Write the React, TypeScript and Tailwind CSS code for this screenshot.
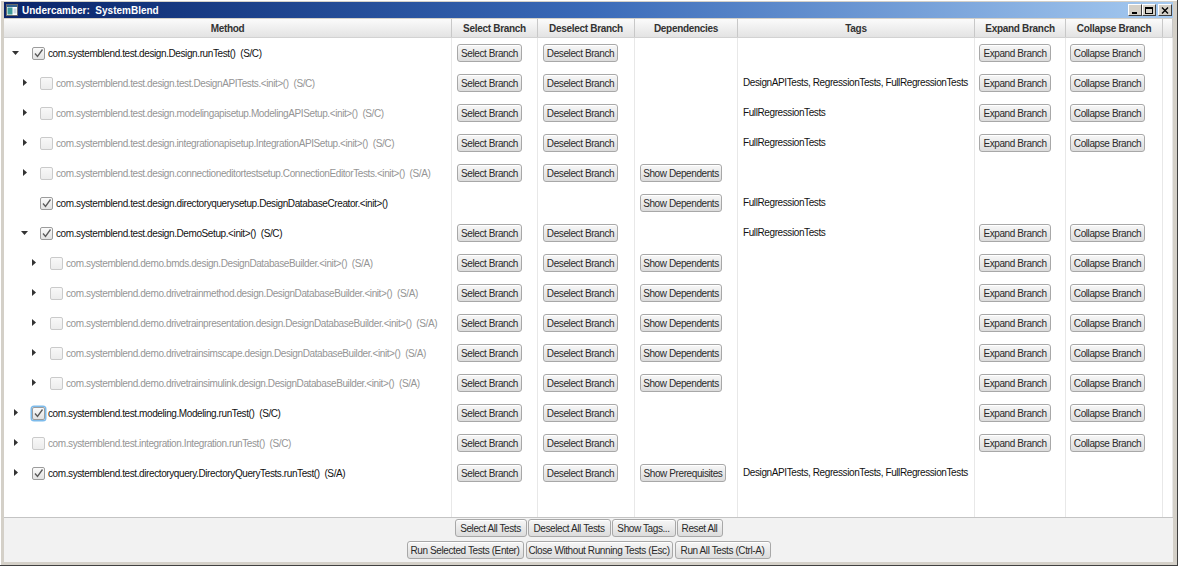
import clsx from "clsx";

// Column widths, left to right: Method, Select, Deselect, Dependencies, Tags, Expand, Collapse, filler
const COLS = "grid grid-cols-[448px_86px_97px_103px_237px_91px_97px_10px]";

const HEADERS = [
  "Method",
  "Select Branch",
  "Deselect Branch",
  "Dependencies",
  "Tags",
  "Expand Branch",
  "Collapse Branch",
  "",
];

type Row = {
  level: 0 | 1 | 2;
  arrow?: "open" | "closed";
  checked: boolean;
  enabled: boolean;
  focused?: boolean;
  label: string;
  branch?: boolean;
  dep?: string;
  tags?: string;
  expand?: boolean;
};

const ALL_TAGS = "DesignAPITests, RegressionTests, FullRegressionTests";

const ROWS: Row[] = [
  { level: 0, arrow: "open", checked: true, enabled: true, label: "com.systemblend.test.design.Design.runTest()  (S/C)", branch: true, expand: true },
  { level: 1, arrow: "closed", checked: false, enabled: false, label: "com.systemblend.test.design.test.DesignAPITests.<init>()  (S/C)", branch: true, tags: ALL_TAGS, expand: true },
  { level: 1, arrow: "closed", checked: false, enabled: false, label: "com.systemblend.test.design.modelingapisetup.ModelingAPISetup.<init>()  (S/C)", branch: true, tags: "FullRegressionTests", expand: true },
  { level: 1, arrow: "closed", checked: false, enabled: false, label: "com.systemblend.test.design.integrationapisetup.IntegrationAPISetup.<init>()  (S/C)", branch: true, tags: "FullRegressionTests", expand: true },
  { level: 1, arrow: "closed", checked: false, enabled: false, label: "com.systemblend.test.design.connectioneditortestsetup.ConnectionEditorTests.<init>()  (S/A)", branch: true, dep: "Show Dependents" },
  { level: 1, checked: true, enabled: true, label: "com.systemblend.test.design.directoryquerysetup.DesignDatabaseCreator.<init>()", dep: "Show Dependents", tags: "FullRegressionTests" },
  { level: 1, arrow: "open", checked: true, enabled: true, label: "com.systemblend.test.design.DemoSetup.<init>()  (S/C)", branch: true, tags: "FullRegressionTests", expand: true },
  { level: 2, arrow: "closed", checked: false, enabled: false, label: "com.systemblend.demo.bmds.design.DesignDatabaseBuilder.<init>()  (S/A)", branch: true, dep: "Show Dependents", expand: true },
  { level: 2, arrow: "closed", checked: false, enabled: false, label: "com.systemblend.demo.drivetrainmethod.design.DesignDatabaseBuilder.<init>()  (S/A)", branch: true, dep: "Show Dependents", expand: true },
  { level: 2, arrow: "closed", checked: false, enabled: false, label: "com.systemblend.demo.drivetrainpresentation.design.DesignDatabaseBuilder.<init>()  (S/A)", branch: true, dep: "Show Dependents", expand: true },
  { level: 2, arrow: "closed", checked: false, enabled: false, label: "com.systemblend.demo.drivetrainsimscape.design.DesignDatabaseBuilder.<init>()  (S/A)", branch: true, dep: "Show Dependents", expand: true },
  { level: 2, arrow: "closed", checked: false, enabled: false, label: "com.systemblend.demo.drivetrainsimulink.design.DesignDatabaseBuilder.<init>()  (S/A)", branch: true, dep: "Show Dependents", expand: true },
  { level: 0, arrow: "closed", checked: true, enabled: true, focused: true, label: "com.systemblend.test.modeling.Modeling.runTest()  (S/C)", branch: true, expand: true },
  { level: 0, arrow: "closed", checked: false, enabled: false, label: "com.systemblend.test.integration.Integration.runTest()  (S/C)", branch: true, expand: true },
  { level: 0, arrow: "closed", checked: true, enabled: true, label: "com.systemblend.test.directoryquery.DirectoryQueryTests.runTest()  (S/A)", branch: true, dep: "Show Prerequisites", tags: ALL_TAGS },
];

// disclosure box (10px) offset from the cell edge, and gap to the checkbox, per tree level
const INDENT = ["pl-[7px]", "pl-[16px]", "pl-[25px]"];
const ARROW_GAP = ["mr-[11px]", "mr-[10px]", "mr-[11px]"];

function Btn({ w, children }: { w: string; children: React.ReactNode }) {
  return (
    <span
      className={clsx(
        "flex h-[18px] shrink-0 items-center justify-center whitespace-nowrap rounded-[3px] border border-[#a8a8a8] bg-gradient-to-b from-[#f7f7f7] to-[#dcdcdc] text-[#2a2a2a] shadow-[inset_0_1px_0_#ffffff]",
        w
      )}
    >
      {children}
    </span>
  );
}

function Arrow({ kind }: { kind?: "open" | "closed" }) {
  if (!kind) return null;
  if (kind === "open")
    return (
      <svg width="8" height="5" viewBox="0 0 8 5">
        <polygon points="0,0 7,0 3.5,4" fill="#333" />
      </svg>
    );
  return (
    <svg width="5" height="8" viewBox="0 0 5 8">
      <polygon points="0,0 4,3.5 0,7" fill="#333" />
    </svg>
  );
}

function Check({ checked, enabled, focused }: { checked: boolean; enabled: boolean; focused?: boolean }) {
  return (
    <span
      className={clsx(
        "flex h-[13px] w-[13px] shrink-0 items-center justify-center rounded-[2px] border",
        enabled
          ? "border-[#9c9c9c] bg-gradient-to-b from-[#fbfbfb] to-[#e2e2e2]"
          : "border-[#cacaca] bg-gradient-to-b from-[#f8f8f8] to-[#ececec]",
        focused && "border-[#3b8fd4] shadow-[0_0_0_1.5px_#7dbbeb]"
      )}
    >
      {checked && (
        <svg width="11" height="11" viewBox="0 0 11 11">
          <path d="M2 5.5 L4.5 8.5 L9.5 1.5" fill="none" stroke="#5a5a5a" strokeWidth="1.3" />
        </svg>
      )}
    </span>
  );
}

function TableRow({ row }: { row: Row }) {
  const cell = "flex items-center border-r border-[#e8e8e8]";
  return (
    <div className={clsx(COLS, "h-[30px]")}>
      <div className={clsx(cell, INDENT[row.level])}>
        <span className={clsx("flex w-[10px] shrink-0 items-center justify-center", ARROW_GAP[row.level])}>
          <Arrow kind={row.arrow} />
        </span>
        <Check checked={row.checked} enabled={row.enabled} focused={row.focused} />
        <span
          className={clsx(
            "ml-[3px] whitespace-pre",
            row.enabled ? "text-[#111]" : "text-[#959595]"
          )}
        >
          {row.label}
        </span>
      </div>
      <div className={clsx(cell, "pl-[5px]")}>{row.branch && <Btn w="w-[65px]">Select Branch</Btn>}</div>
      <div className={clsx(cell, "pl-[5px]")}>{row.branch && <Btn w="w-[75px]">Deselect Branch</Btn>}</div>
      <div className={clsx(cell, "pl-[5px]")}>
        {row.dep && <Btn w={row.dep === "Show Dependents" ? "w-[82px]" : "w-[86px]"}>{row.dep}</Btn>}
      </div>
      <div className={clsx(cell, "whitespace-nowrap pb-[1px] pl-[5px] text-[#111]")}>{row.tags}</div>
      <div className={clsx(cell, "pl-[4px]")}>{row.expand && <Btn w="w-[72px]">Expand Branch</Btn>}</div>
      <div className={clsx(cell, "pl-[4px]")}>{row.expand && <Btn w="w-[75px]">Collapse Branch</Btn>}</div>
      <div className={cell} />
    </div>
  );
}

function TitleIcon() {
  return (
    <svg width="12" height="12" viewBox="0 0 12 12">
      <rect x="0.5" y="0.5" width="11" height="11" fill="#ffffff" stroke="#6b6b6b" />
      <rect x="1" y="1" width="10" height="2" fill="#2f5f8f" />
      <rect x="1.5" y="3.5" width="5" height="7" fill="#3d9a9a" />
      <rect x="7.5" y="4.5" width="3" height="5" fill="#c8d8e0" />
    </svg>
  );
}

function WinBtn({ kind }: { kind: "min" | "max" | "close" }) {
  return (
    <span className="flex h-[12px] w-[14px] items-center justify-center border border-b-[#404040] border-l-[#ffffff] border-r-[#404040] border-t-[#ffffff] bg-[#d4d0c8]">
      <svg width="8" height="7" viewBox="0 0 8 7">
        {kind === "min" && <rect x="1" y="5" width="5" height="2" fill="#000" />}
        {kind === "max" && (
          <>
            <rect x="0.5" y="0.5" width="7" height="6" fill="none" stroke="#000" />
            <rect x="0" y="0" width="8" height="2" fill="#000" />
          </>
        )}
        {kind === "close" && <path d="M1 0.5 L7 6.5 M7 0.5 L1 6.5" stroke="#000" strokeWidth="1.4" />}
      </svg>
    </span>
  );
}

export default function App() {
  return (
    <div className="flex h-[566px] w-[1178px] flex-col border-b border-r border-[#404040] bg-[#d4d0c8] px-[4px] pb-[3px] pt-[2px] font-['Liberation_Sans',Arial,sans-serif] text-[10px] tracking-[-0.4px] shadow-[inset_1px_1px_0_#ffffff]">
      {/* Title bar */}
      <div className="flex h-[16px] shrink-0 items-center bg-gradient-to-r from-[#0a246a] via-[#3a6ab8] to-[#a6caf0] pl-[2px] pr-[1px]">
        <TitleIcon />
        <span className="ml-[4px] text-[10px] font-bold tracking-normal text-white">Undercamber:&nbsp; SystemBlend</span>
        <div className="ml-auto flex items-center">
          <WinBtn kind="min" />
          <WinBtn kind="max" />
          <span className="w-[2px]" />
          <WinBtn kind="close" />
        </div>
      </div>

      <div className="mt-[1px] flex flex-1 flex-col">
        {/* Tree table */}
        <div className="flex flex-1 flex-col bg-white">
          <div className={clsx(COLS, "h-[19px] shrink-0 border-b border-[#d2d2d2] bg-gradient-to-b from-[#fbfbfb] to-[#e3e3e3]")}>
            {HEADERS.map((h, i) => (
              <div
                key={i}
                className="flex items-center justify-center border-r border-[#c8c8c8] font-bold tracking-[-0.3px] text-[#333]"
              >
                {h}
              </div>
            ))}
          </div>
          {ROWS.map((row, i) => (
            <TableRow key={i} row={row} />
          ))}
          <div className={clsx(COLS, "flex-1")}>
            {HEADERS.map((_, i) => (
              <div key={i} className="border-r border-[#e8e8e8]" />
            ))}
          </div>
        </div>

        {/* Action buttons */}
        <div className="flex h-[45px] shrink-0 flex-col items-center gap-[4px] border-t border-[#c4c4c4] bg-[#f2f2f2] pt-[1px]">
          <div className="flex gap-[1px]">
            <Btn w="w-[72px]">Select All Tests</Btn>
            <Btn w="w-[83px]">Deselect All Tests</Btn>
            <Btn w="w-[64px]">Show Tags...</Btn>
            <Btn w="w-[46px]">Reset All</Btn>
          </div>
          <div className="flex gap-[2px]">
            <Btn w="w-[117px]">Run Selected Tests (Enter)</Btn>
            <Btn w="w-[147px]">Close Without Running Tests (Esc)</Btn>
            <Btn w="w-[96px]">Run All Tests (Ctrl-A)</Btn>
          </div>
        </div>
      </div>
    </div>
  );
}
